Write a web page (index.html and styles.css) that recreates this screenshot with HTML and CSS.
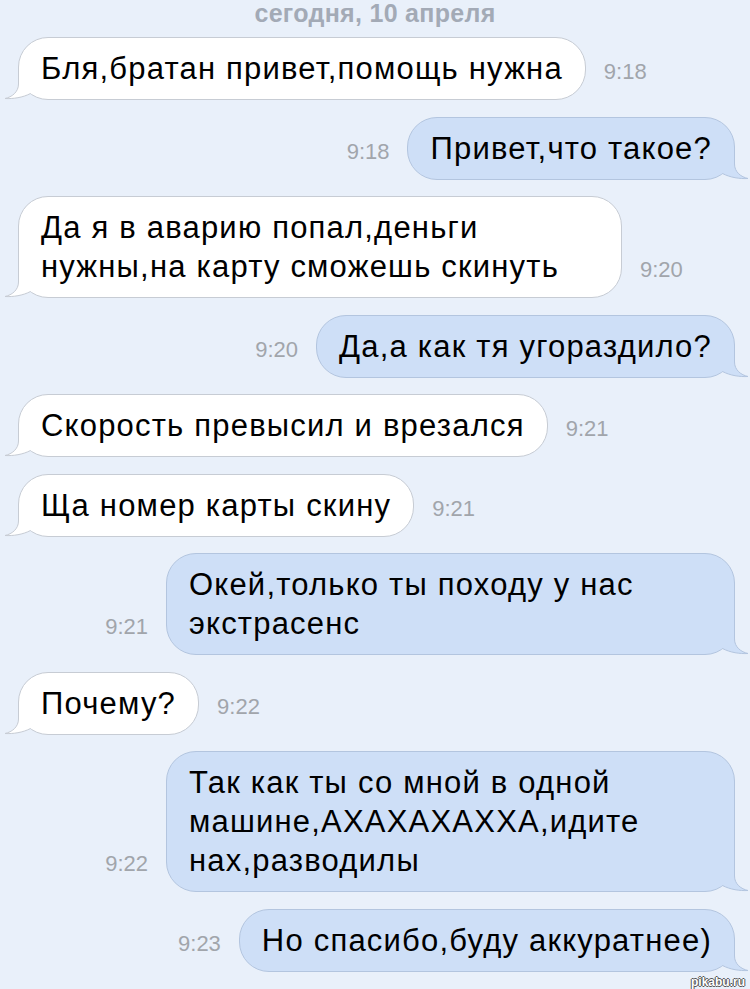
FILE: index.html
```html
<!DOCTYPE html>
<html lang="ru">
<head>
  <meta charset="UTF-8" />
  <title>Сообщения</title>
  <link rel="stylesheet" href="styles.css">
</head>
<body>

  <div class="date">сегодня, 10 апреля</div>

  <div class="chat">
    <div class="msg in">
      <div class="bubble">Бля,братан привет,помощь нужна<svg class="tail" viewBox="0 0 46 32"><path class="tail-fill" d="M14.5,0 L14.5,16 C14.5,24 8,29 1,30.5 C9,31 19,29.5 26.5,25.5 L30,20 L30,0 Z"/><path class="tail-line" d="M14.5,0 L14.5,16 C14.5,24 8,29 1,30.5 C9,31 19,29.5 26.5,25.5"/></svg></div>
      <div class="time">9:18</div>
    </div>

    <div class="msg out">
      <div class="time">9:18</div>
      <div class="bubble">Привет,что такое?<svg class="tail" viewBox="0 0 46 32"><path class="tail-fill" d="M14.5,0 L14.5,16 C14.5,24 8,29 1,30.5 C9,31 19,29.5 26.5,25.5 L30,20 L30,0 Z"/><path class="tail-line" d="M14.5,0 L14.5,16 C14.5,24 8,29 1,30.5 C9,31 19,29.5 26.5,25.5"/></svg></div>
    </div>

    <div class="msg in">
      <div class="bubble">Да я в аварию попал,деньги нужны,на карту сможешь скинуть<svg class="tail" viewBox="0 0 46 32"><path class="tail-fill" d="M14.5,0 L14.5,16 C14.5,24 8,29 1,30.5 C9,31 19,29.5 26.5,25.5 L30,20 L30,0 Z"/><path class="tail-line" d="M14.5,0 L14.5,16 C14.5,24 8,29 1,30.5 C9,31 19,29.5 26.5,25.5"/></svg></div>
      <div class="time">9:20</div>
    </div>

    <div class="msg out">
      <div class="time">9:20</div>
      <div class="bubble">Да,а как тя угораздило?<svg class="tail" viewBox="0 0 46 32"><path class="tail-fill" d="M14.5,0 L14.5,16 C14.5,24 8,29 1,30.5 C9,31 19,29.5 26.5,25.5 L30,20 L30,0 Z"/><path class="tail-line" d="M14.5,0 L14.5,16 C14.5,24 8,29 1,30.5 C9,31 19,29.5 26.5,25.5"/></svg></div>
    </div>

    <div class="msg in">
      <div class="bubble">Скорость превысил и врезался<svg class="tail" viewBox="0 0 46 32"><path class="tail-fill" d="M14.5,0 L14.5,16 C14.5,24 8,29 1,30.5 C9,31 19,29.5 26.5,25.5 L30,20 L30,0 Z"/><path class="tail-line" d="M14.5,0 L14.5,16 C14.5,24 8,29 1,30.5 C9,31 19,29.5 26.5,25.5"/></svg></div>
      <div class="time">9:21</div>
    </div>

    <div class="msg in">
      <div class="bubble">Ща номер карты скину<svg class="tail" viewBox="0 0 46 32"><path class="tail-fill" d="M14.5,0 L14.5,16 C14.5,24 8,29 1,30.5 C9,31 19,29.5 26.5,25.5 L30,20 L30,0 Z"/><path class="tail-line" d="M14.5,0 L14.5,16 C14.5,24 8,29 1,30.5 C9,31 19,29.5 26.5,25.5"/></svg></div>
      <div class="time">9:21</div>
    </div>

    <div class="msg out">
      <div class="time">9:21</div>
      <div class="bubble">Окей,только ты походу у нас экстрасенс<svg class="tail" viewBox="0 0 46 32"><path class="tail-fill" d="M14.5,0 L14.5,16 C14.5,24 8,29 1,30.5 C9,31 19,29.5 26.5,25.5 L30,20 L30,0 Z"/><path class="tail-line" d="M14.5,0 L14.5,16 C14.5,24 8,29 1,30.5 C9,31 19,29.5 26.5,25.5"/></svg></div>
    </div>

    <div class="msg in">
      <div class="bubble">Почему?<svg class="tail" viewBox="0 0 46 32"><path class="tail-fill" d="M14.5,0 L14.5,16 C14.5,24 8,29 1,30.5 C9,31 19,29.5 26.5,25.5 L30,20 L30,0 Z"/><path class="tail-line" d="M14.5,0 L14.5,16 C14.5,24 8,29 1,30.5 C9,31 19,29.5 26.5,25.5"/></svg></div>
      <div class="time">9:22</div>
    </div>

    <div class="msg out">
      <div class="time">9:22</div>
      <div class="bubble">Так как ты со мной в одной машине,АХАХАХАХХА,идите нах,разводилы<svg class="tail" viewBox="0 0 46 32"><path class="tail-fill" d="M14.5,0 L14.5,16 C14.5,24 8,29 1,30.5 C9,31 19,29.5 26.5,25.5 L30,20 L30,0 Z"/><path class="tail-line" d="M14.5,0 L14.5,16 C14.5,24 8,29 1,30.5 C9,31 19,29.5 26.5,25.5"/></svg></div>
    </div>

    <div class="msg out">
      <div class="time">9:23</div>
      <div class="bubble">Но спасибо,буду аккуратнее)<svg class="tail" viewBox="0 0 46 32"><path class="tail-fill" d="M14.5,0 L14.5,16 C14.5,24 8,29 1,30.5 C9,31 19,29.5 26.5,25.5 L30,20 L30,0 Z"/><path class="tail-line" d="M14.5,0 L14.5,16 C14.5,24 8,29 1,30.5 C9,31 19,29.5 26.5,25.5"/></svg></div>
    </div>
  </div>

  <div class="mark">pikabu.ru</div>

</body>
</html>
```

FILE: styles.css
```css
body {
  margin: 0;
  background: #e9f0fa;
  font-family: 'Liberation Sans', Arial, sans-serif;
  color: #000;
  overflow: hidden;
}

.date {
  text-align: center;
  font-weight: bold;
  font-size: 25px;
  letter-spacing: 0.3px;
  line-height: 26px;
  color: #a3aab6;
  margin-top: 0;
  margin-bottom: 11px;
}

.chat {
  display: flex;
  flex-direction: column;
  gap: 16.5px;
  padding: 0 15px 0 18px;
}

.msg {
  display: flex;
  align-items: flex-end;
  gap: 18px;
}

.msg.out {
  justify-content: flex-end;
}

.bubble {
  position: relative;
  font-size: 31px;
  letter-spacing: 1.2px;
  line-height: 39px;
  padding: 11px 22px;
  border-radius: 30px;
  background: #fff;
  border: 1px solid #c7ccd4;
  max-width: 558px;
}

.msg.out .bubble {
  background: #cedff7;
  border-color: #b3c5df;
  max-width: 523px;
}

.time {
  font-size: 22px;
  line-height: 22px;
  color: #a1a5ab;
  margin-bottom: 17px;
  white-space: nowrap;
}

/* bubble tail, bottom corner */
.tail {
  position: absolute;
  left: -15px;
  bottom: -1px;
  width: 46px;
  height: 32px;
}

.msg.out .tail {
  left: auto;
  right: -15px;
  transform: scaleX(-1);
}

.tail-fill {
  fill: #fff;
}

.tail-line {
  fill: none;
  stroke: #c7ccd4;
  stroke-width: 1;
}

.msg.out .tail-fill {
  fill: #cedff7;
}

.msg.out .tail-line {
  stroke: #b3c5df;
}

.mark {
  text-align: right;
  padding-right: 5px;
  margin-top: 3px;
  font-size: 12px;
  font-weight: bold;
  color: #fff;
  text-shadow: 1px 0 0 #555, -1px 0 0 #555, 0 1px 0 #555, 0 -1px 0 #555;
}
```
